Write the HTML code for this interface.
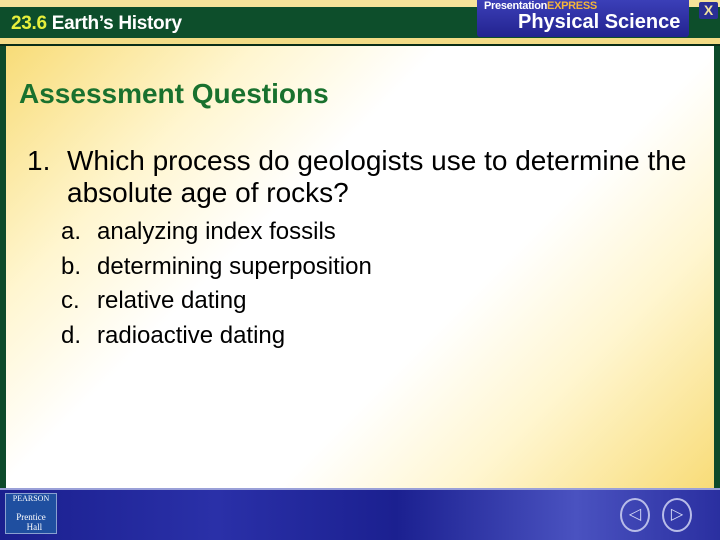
<!DOCTYPE html>
<html><head><style>
body{margin:0;width:720px;height:540px;overflow:hidden;position:relative;background:#0d4a2a;font-family:"Liberation Sans",Arial,sans-serif}
.a{position:absolute;white-space:nowrap}
</style></head><body>
<div class="a" style="left:0;top:0;width:720px;height:7px;background:#f6e39a"></div>
<div class="a" style="left:0;top:7px;width:720px;height:31px;background:#0d4e2b"></div>
<div class="a" style="left:0;top:38px;width:720px;height:6px;background:#f3dc86"></div>
<div class="a" style="left:0;top:44px;width:720px;height:2px;background:#0a2e18"></div>
<div class="a" style="left:11px;top:13px;font-size:19px;font-weight:bold;color:#fff;letter-spacing:-0.3px"><span style="color:#e6ef3c">23.6</span> Earth’s History</div>
<div class="a" style="left:477px;top:0;width:212px;height:37px;background:linear-gradient(#3b3fb8,#23238f);border-radius:0 0 3px 3px"></div>
<div class="a" style="left:484px;top:0;font-size:11px;font-weight:bold;color:#fff;letter-spacing:-0.3px">Presentation<span style="color:#f3b53a">EXPRESS</span></div>
<div class="a" style="left:518px;top:11px;font-size:20px;font-weight:bold;color:#fff">Physical Science</div>
<div class="a" style="left:699px;top:2px;width:19px;height:17px;background:#2a2f95;border-radius:2px;color:#f1e3a0;font-weight:bold;font-size:14px;text-align:center;line-height:17px">X</div>
<div class="a" style="left:6px;top:46px;width:708px;height:442px;background:linear-gradient(135deg,#f8dc78 0%,#fff6d0 22%,#ffffff 38%,#ffffff 62%,#fff6d0 78%,#f8dc78 100%)"></div>
<div class="a" style="left:19px;top:78px;font-size:28px;font-weight:bold;color:#19712e">Assessment Questions</div>
<div class="a" style="left:27px;top:145px;font-size:28px;color:#000;line-height:32px">1.</div>
<div class="a" style="left:67px;top:145px;font-size:28px;color:#000;line-height:32px">Which process do geologists use to determine the<br>absolute age of rocks?</div>
<div class="a" style="left:61px;top:215px;font-size:24px;color:#000;line-height:34.6px">a.<br>b.<br>c.<br>d.</div>
<div class="a" style="left:97px;top:215px;font-size:24px;color:#000;line-height:34.6px">analyzing index fossils<br>determining superposition<br>relative dating<br>radioactive dating</div>
<div class="a" style="left:0;top:488px;width:720px;height:52px;background:linear-gradient(90deg,#1a1f8e,#2a30a8 30%,#1b2090 55%,#4a52c0 80%,#2a2fa0);border-top:2px solid #9aa0d8;box-sizing:border-box"></div>
<div class="a" style="left:5px;top:493px;width:52px;height:41px;background:#1f4fa0;border:1px solid #8aa0d0;box-sizing:border-box;color:#fff;font-family:'Liberation Serif',serif;font-size:8px;text-align:center">PEARSON<div style="font-size:9px;margin-top:9px">Prentice<br>&nbsp;&nbsp;&nbsp;Hall</div></div>
<div class="a" style="left:620px;top:498px;width:30px;height:34px;border:2px solid #b8bce8;border-radius:50%;box-sizing:border-box;color:#d8dcf8;font-size:16px;text-align:center;line-height:30px">◁</div>
<div class="a" style="left:662px;top:498px;width:30px;height:34px;border:2px solid #b8bce8;border-radius:50%;box-sizing:border-box;color:#d8dcf8;font-size:16px;text-align:center;line-height:30px">▷</div>
</body></html>
